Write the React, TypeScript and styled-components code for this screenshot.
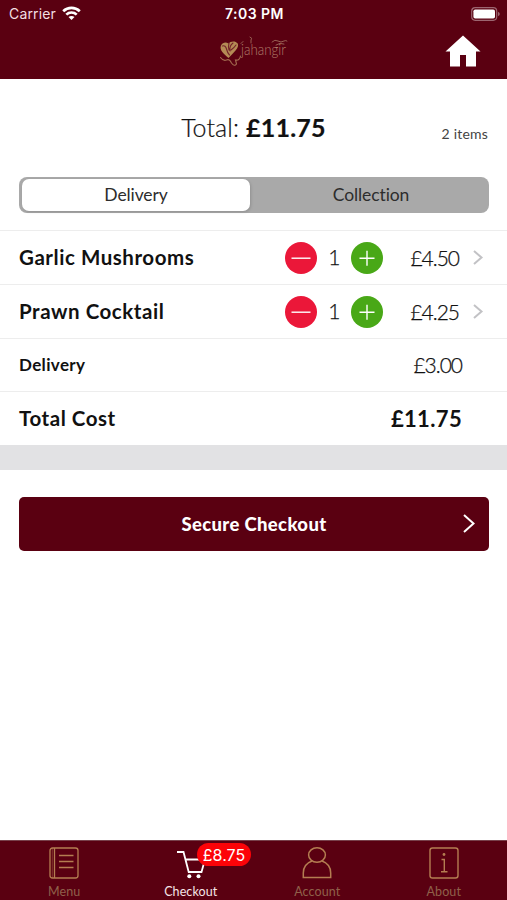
import React from "react";
import styled, { createGlobalStyle } from "styled-components";

const GlobalStyle = createGlobalStyle`
  * { box-sizing: border-box; }
  html, body { margin: 0; padding: 0; background: #fff; }
  body { font-family: Lato, "Open Sans", sans-serif; color: #111; }
  button { font-family: inherit; color: inherit; border: 0; padding: 0; background: none; }
  svg { display: block; flex: none; overflow: visible; }
`;

const maroon = "#5a0011";

const Screen = styled.div`
  width: 507px;
  height: 900px;
  display: flex;
  flex-direction: column;
  overflow: hidden;
  background: #fff;
`;

const Header = styled.header`
  height: 79px;
  flex: none;
  background: ${maroon};
  color: #fff;
`;

const StatusBar = styled.div`
  height: 27px;
  padding: 0 7px 0 9px;
  display: grid;
  grid-template-columns: 1fr auto 1fr;
  align-items: center;
  font-family: Inter, sans-serif;
  font-size: 14px;
`;

const Carrier = styled.div`
  display: flex;
  align-items: center;
  gap: 6px;
  color: #f3dfe2;
  letter-spacing: 0.15px;
`;

const Clock = styled.div`
  font-weight: 600;
  letter-spacing: 0.45px;
`;

const BatterySlot = styled.div`
  display: flex;
  justify-content: flex-end;
`;

const NavBar = styled.div`
  height: 52px;
  display: grid;
  grid-template-columns: 1fr auto 1fr;
  align-items: center;
  padding: 0 26px 0 27px;
`;

const Brand = styled.div`
  grid-column: 2;
  display: flex;
  height: 36px;
  width: 70px;
  margin-bottom: 2px;
`;

const HomeButton = styled.button`
  justify-self: end;
  margin-top: -4px;
`;

const Summary = styled.section`
  height: 98px;
  flex: none;
  display: grid;
  grid-template-columns: 1fr auto 1fr;
  padding: 0 19px;
`;

const SummaryTotal = styled.div`
  grid-column: 2;
  margin-top: 33px;
  font-size: 25px;
  line-height: 30px;
  font-weight: 300;
  letter-spacing: 0.1px;
  white-space: nowrap;
  -webkit-text-stroke: 0.2px currentColor;
  b { font-weight: 700; letter-spacing: 0.25px; }
`;

const ItemCount = styled.div`
  justify-self: end;
  margin-top: 45px;
  font-size: 14px;
  line-height: 20px;
  letter-spacing: 0.2px;
  color: #444;
`;

const Segments = styled.div`
  height: 35.5px;
  flex: none;
  margin: 0 18px 17.5px 19px;
  padding: 2px;
  display: flex;
  border-radius: 8px;
  background: #a9a9a9;
`;

const Segment = styled.button<{ $selected?: boolean }>`
  flex: ${(p) => (p.$selected ? "0 0 228px" : "1")};
  margin-left: ${(p) => (p.$selected ? "1px" : "5px")};
  border-radius: 7px;
  font-size: 17.5px;
  line-height: 30px;
  color: #2d2d2d;
  letter-spacing: -0.1px;
  background: ${(p) => (p.$selected ? "#fff" : "transparent")};
  box-shadow: ${(p) => (p.$selected ? "1px 1px 3px rgba(0,0,0,.15)" : "none")};
`;

const Row = styled.div<{ $height: number; $end: number }>`
  height: ${(p) => p.$height}px;
  flex: none;
  border-top: 1px solid #ededed;
  padding: 0 ${(p) => p.$end}px 0 19px;
  display: flex;
  align-items: center;
`;

const RowLabel = styled.div<{ $small?: boolean }>`
  flex: 1;
  margin-top: -2px;
  font-weight: 700;
  font-size: ${(p) => (p.$small ? 17 : 20.5)}px;
  letter-spacing: ${(p) => (p.$small ? 0.35 : 0.55)}px;
  white-space: nowrap;
`;

const Price = styled.div<{ $bold?: boolean }>`
  margin-top: -1px;
  font-size: ${(p) => (p.$bold ? 22 : 21)}px;
  font-weight: ${(p) => (p.$bold ? 700 : 300)};
  letter-spacing: ${(p) => (p.$bold ? 0.35 : -1)}px;
  white-space: nowrap;
  -webkit-text-stroke: ${(p) => (p.$bold ? 0 : 0.25)}px currentColor;
`;

const Stepper = styled.div`
  display: flex;
  align-items: center;
  width: 98px;
  justify-content: space-between;
  margin-right: 27px;
`;

const Quantity = styled.span`
  margin-top: -2px;
  font-size: 21px;
  font-weight: 300;
  -webkit-text-stroke: 0.25px currentColor;
`;

const RoundButton = styled.button<{ $color: string }>`
  width: 32px;
  height: 32px;
  border-radius: 50%;
  display: grid;
  place-items: center;
  background: ${(p) => p.$color};
`;

const RowArrow = styled.div`
  margin-left: 14px;
`;

const Divider = styled.div`
  height: 25px;
  flex: none;
  background: #e2e2e4;
`;

const CheckoutButton = styled.button`
  margin: 27px 18px 0 19px;
  height: 53.5px;
  flex: none;
  display: grid;
  grid-template-columns: 1fr auto 1fr;
  align-items: center;
  padding: 0 14px;
  border-radius: 5px;
  background: ${maroon};
  color: #fff;
  svg { justify-self: end; }
`;

const CheckoutLabel = styled.span`
  grid-column: 2;
  font-size: 18.5px;
  font-weight: 900;
  letter-spacing: 0.35px;
`;

const TabBar = styled.nav`
  margin-top: auto;
  height: 60px;
  flex: none;
  display: grid;
  grid-template-columns: repeat(4, 126.5px);
  padding-left: 1px;
  background: ${maroon};
  border-top: 1px solid #78414b;
`;

const Tab = styled.button<{ $active?: boolean }>`
  height: 59px;
  padding-top: 4.5px;
  display: flex;
  flex-direction: column;
  align-items: center;
  color: ${(p) => (p.$active ? "#f6e5e7" : "#90604a")};
`;

const TabIcon = styled.div`
  position: relative;
  height: 34px;
  width: 34px;
`;

const TabLabel = styled.span`
  margin-top: 4px;
  font-size: 12.5px;
  line-height: 16px;
  letter-spacing: 0.1px;
`;

const Badge = styled.span`
  position: absolute;
  left: 23px;
  top: -3px;
  width: 54.5px;
  height: 23px;
  border-radius: 12px;
  background: #fc0308;
  color: #fff;
  font-family: Inter, sans-serif;
  font-size: 16px;
  line-height: 24px;
  text-align: center;
`;

const gold = "#b47d51";

const WifiIcon = () => (
  <svg width="19" height="15" viewBox="0 0 19 15" fill="none" stroke="#fff" strokeWidth="2.7">
    <path d="M1.2 5.3C5.9.8 13.1.8 17.8 5.3" />
    <path d="M4.3 8.6C7.2 5.8 11.8 5.8 14.7 8.6" />
    <path d="M9.5 14 6.5 11C8.2 9.5 10.8 9.5 12.5 11Z" fill="#fff" stroke="none" />
  </svg>
);

const BatteryIcon = () => (
  <svg width="29" height="14" viewBox="0 0 29 14" fill="none">
    <rect x=".7" y=".7" width="25" height="12.6" rx="3.5" stroke="#9c6570" strokeWidth="1.2" />
    <rect x="2.4" y="2.4" width="21.6" height="9.2" rx="1.8" fill="#fff" />
    <path d="M27 4.7q1.8.7 1.8 2.3T27 9.3Z" fill="#9c6570" />
  </svg>
);

const HomeIcon = () => (
  <svg width="36" height="32" viewBox="0 0 36 32" fill="#fff">
    <path d="M18 .5 35.5 16.5H31V31.5H21V20H15V31.5H5V16.5H.5Z" />
  </svg>
);

const BrandLogo = () => (
  <svg width="70" height="36" viewBox="0 0 70 36" fill="none" strokeLinecap="round">
    <path d="M9.5 24C5 20 0 16 2 11.5 4 8 7 8 9.5 9.5c2-2.5 7-3 9.2 0 2 4-4 9-9.2 14.5Z" fill="#b48a55" />
    <path d="M3.5 12q3-1 4 3t3 6M10 9q-1 4 0 7M14 9q-4 3-3 8M17 11q-2 3-5 5" stroke="#73212a" strokeWidth="1.1" />
    <path d="M1.5 23.5q3 4 6 2.5t5 3q3 4 5 1l-1-4q4 1 5-4" stroke="#a36b50" strokeWidth="1.1" />
    <path d="M22 9.5l2-2M31 3q3 1 1 3v3M53 8q3-3 6-1t6 0q2-1 3 0M57 11q4-3 8-1" stroke="#985f53" strokeWidth="1" />
    <text x="22" y="20.5" textLength="45" lengthAdjust="spacingAndGlyphs" fontFamily="Lato, sans-serif" fontSize="15" fontWeight="300" fill="#b17b68">jahangir</text>
  </svg>
);

const ArrowIcon = ({ color, height, width }: { color: string; height: number; width: number }) => (
  <svg width={width} height={height} viewBox={`0 0 ${width} ${height}`} fill="none" stroke={color} strokeWidth="2">
    <path d={`M1 1 ${width - 1.5} ${height / 2} 1 ${height - 1}`} />
  </svg>
);

const SignIcon = ({ plus = false }: { plus?: boolean }) => (
  <svg width="20" height="20" viewBox="0 0 20 20" fill="none" stroke="#fff" strokeWidth="1.4">
    <path d={plus ? "M2.5 10.2H17.5M10 2.7V17.7" : "M.5 10.2H19.5"} />
  </svg>
);

const MenuIcon = () => (
  <svg width="34" height="34" viewBox="0 0 34 34" fill="none" stroke={gold} strokeWidth="1.3">
    <rect x="3" y="2" width="28" height="30" rx="2.5" />
    <path d="M7.5 2V32M12 9.5H26.5M12 15.5H26.5M12 21.5H26.5" />
    <path d="M5.3 2V32" strokeWidth=".7" opacity=".6" />
  </svg>
);

const CartIcon = () => (
  <svg width="34" height="34" viewBox="0 0 34 34" fill="none" stroke="#fff" strokeWidth="1.8">
    <path d="M3 6H9.5L14.7 26H27.5L31 13.5H11.5" />
    <circle cx="15.3" cy="30.3" r="2" fill="#fff" stroke="none" />
    <circle cx="24.5" cy="30.3" r="2" fill="#fff" stroke="none" />
  </svg>
);

const AccountIcon = () => (
  <svg width="34" height="34" viewBox="0 0 34 34" fill="none" stroke={gold} strokeWidth="1.5">
    <ellipse cx="17" cy="9" rx="8.4" ry="7.2" />
    <path d="M12 15C6.5 17 3.3 21.5 3.3 27v4.5H30.7V27C30.7 21.5 27.5 17 22 15" />
  </svg>
);

const AboutIcon = () => (
  <svg width="34" height="34" viewBox="0 0 34 34" fill="none" stroke={gold} strokeWidth="1.4">
    <rect x="3" y="2" width="28" height="30" rx="2.5" />
    <path d="M14.5 13.5H17.3V25.7M14 25.7H20.5" />
    <circle cx="17" cy="8.5" r="1.4" fill={gold} stroke="none" />
  </svg>
);

const items = [
  { name: "Garlic Mushrooms", quantity: 1, price: "£4.50" },
  { name: "Prawn Cocktail", quantity: 1, price: "£4.25" },
];

const tabs = [
  { label: "Menu", Icon: MenuIcon },
  { label: "Checkout", Icon: CartIcon, badge: "£8.75" },
  { label: "Account", Icon: AccountIcon },
  { label: "About", Icon: AboutIcon },
];

export default function App() {
  return (
    <Screen>
      <GlobalStyle />
      <Header>
        <StatusBar>
          <Carrier>Carrier <WifiIcon /></Carrier>
          <Clock>7:03 PM</Clock>
          <BatterySlot><BatteryIcon /></BatterySlot>
        </StatusBar>
        <NavBar>
          <Brand><BrandLogo /></Brand>
          <HomeButton aria-label="Home"><HomeIcon /></HomeButton>
        </NavBar>
      </Header>
      <Summary>
        <SummaryTotal>Total: <b>£11.75</b></SummaryTotal>
        <ItemCount>2 items</ItemCount>
      </Summary>
      <Segments>
        <Segment $selected>Delivery</Segment>
        <Segment>Collection</Segment>
      </Segments>
      {items.map((item) => (
        <Row key={item.name} $height={54} $end={24}>
          <RowLabel>{item.name}</RowLabel>
          <Stepper>
            <RoundButton $color="#eb1739" aria-label="Remove one"><SignIcon /></RoundButton>
            <Quantity>{item.quantity}</Quantity>
            <RoundButton $color="#49a817" aria-label="Add one"><SignIcon plus /></RoundButton>
          </Stepper>
          <Price>{item.price}</Price>
          <RowArrow><ArrowIcon color="#c2c2c5" width={10} height={15} /></RowArrow>
        </Row>
      ))}
      <Row $height={53} $end={45}>
        <RowLabel $small>Delivery</RowLabel>
        <Price>£3.00</Price>
      </Row>
      <Row $height={54} $end={45}>
        <RowLabel>Total Cost</RowLabel>
        <Price $bold>£11.75</Price>
      </Row>
      <Divider />
      <CheckoutButton>
        <CheckoutLabel>Secure Checkout</CheckoutLabel>
        <ArrowIcon color="#fff" width={12} height={19} />
      </CheckoutButton>
      <TabBar>
        {tabs.map(({ label, Icon, badge }) => (
          <Tab key={label} $active={Boolean(badge)}>
            <TabIcon>
              <Icon />
              {badge && <Badge>{badge}</Badge>}
            </TabIcon>
            <TabLabel>{label}</TabLabel>
          </Tab>
        ))}
      </TabBar>
    </Screen>
  );
}
